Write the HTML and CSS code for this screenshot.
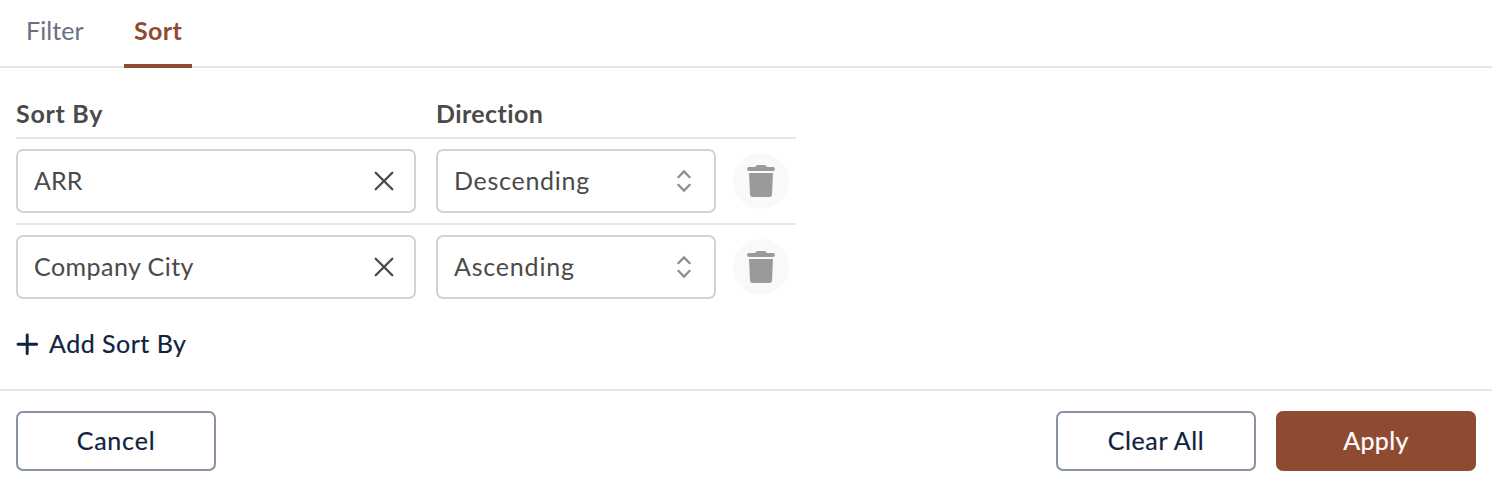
FILE: index.html
```html
<!DOCTYPE html>
<html lang="en">
<head>
<meta charset="utf-8">
<title>Sort</title>
<link rel="stylesheet" href="styles.css">
</head>
<body>
<svg width="0" height="0" class="sprite" aria-hidden="true">
  <symbol id="clear" viewBox="0 0 20 20"><path d="M1.7 1.7 18.3 18.3M18.3 1.7 1.7 18.3" fill="none" stroke="#434a54" stroke-width="2.3" stroke-linecap="round"/></symbol>
  <symbol id="chevrons" viewBox="0 0 16 24"><path d="M2.3 8.2 8 2.4l5.7 5.8M2.3 15.8l5.7 5.8 5.7-5.8" fill="none" stroke="#868e96" stroke-width="2.2" stroke-linecap="round"/></symbol>
  <symbol id="trash" viewBox="0 0 28 32"><path d="M2 2H8Q9 0 11 0H17Q19 0 20 2H26Q28 2 28 4Q28 6 26 6H2Q0 6 0 4Q0 2 2 2ZM2 8H26L25 29.5Q24.8 32 22.5 32H5.5Q3.2 32 3 29.5Z" fill="#9a9a9a"/></symbol>
</svg>
<nav class="tabs">
  <a class="tab"><span class="t-filter">Filter</span></a>
  <a class="tab active"><span class="t-sort">Sort</span></a>
</nav>
<main class="panel">
  <div class="head"><b class="t-by">Sort By</b><b class="t-direction">Direction</b></div>
  <div class="row">
    <div class="field"><span class="t-arr">ARR</span><svg class="clear"><use href="#clear"/></svg></div>
    <div class="field"><span class="t-desc">Descending</span><svg class="chevrons"><use href="#chevrons"/></svg></div>
    <button class="delete" aria-label="Delete"><svg class="trash"><use href="#trash"/></svg></button>
  </div>
  <div class="row">
    <div class="field"><span class="t-city">Company City</span><svg class="clear"><use href="#clear"/></svg></div>
    <div class="field"><span class="t-asc">Ascending</span><svg class="chevrons"><use href="#chevrons"/></svg></div>
    <button class="delete" aria-label="Delete"><svg class="trash"><use href="#trash"/></svg></button>
  </div>
  <button class="add"><svg class="plus" viewBox="0 0 22 22"><path d="M11.2 2V20.6M2 11.3H20.6" stroke="#0e233d" stroke-width="2.9" stroke-linecap="round"/></svg><span class="t-add">Add Sort By</span></button>
</main>
<footer class="footer">
  <button class="btn"><span class="t-cancel">Cancel</span></button>
  <div class="actions">
    <button class="btn"><span class="t-clear">Clear All</span></button>
    <button class="btn primary"><span class="t-apply">Apply</span></button>
  </div>
</footer>
</body>
</html>
```
FILE: styles.css
```css
* { box-sizing: border-box; }
body { margin: 0; height: 488px; background: #fff; color: #4a4a4a; font: 25px/30px Lato, "Open Sans", sans-serif; font-variant-ligatures: none; overflow: hidden; }
.sprite { display: none; }
button { font: inherit; border: 0; padding: 0; background: none; }
svg { flex: none; }
span, b { white-space: nowrap; }
.tabs { display: flex; height: 68px; padding-left: 16px; gap: 30px; border-bottom: 2px solid #e5e5ea; }
.tab { height: 68px; padding: 15px 10px 0; color: #6b7080; width: 78px; }
.tab.active { width: 68px; color: #8f4b32; border-bottom: 4px solid #8f4b32; font-weight: 700; }
.panel { width: 796px; height: 321px; padding: 30px 0 0 16px; }
.head { display: grid; grid-template-columns: 420px 1fr; height: 41px; border-bottom: 2px solid #e5e5ea; }
.row { display: grid; grid-template-columns: 400px 280px 56px; column-gap: 20px; align-items: center; height: 86px; border-bottom: 2px solid #e5e5ea; }
.row + .row { border-bottom-color: transparent; }
.field { display: flex; align-items: center; justify-content: space-between; height: 64px; padding: 0 20px 0 16px; border: 2px solid #ced3d8; border-radius: 7px; }
.field span, .add span { padding-bottom: 2px; }
.clear { width: 20px; height: 20px; }
.chevrons { width: 16px; height: 24px; margin-right: 2px; }
.delete { display: flex; align-items: center; justify-content: center; width: 56px; height: 56px; margin-left: -3px; border-radius: 50%; background: #f9f9f9; }
.trash { width: 28px; height: 32px; }
.add { display: flex; align-items: center; gap: 11px; height: 30px; margin-top: 18px; color: #0e233d; -webkit-text-stroke: .2px; }
.plus { width: 22px; height: 22px; }
.footer { display: flex; justify-content: space-between; height: 99px; padding: 20px 16px; border-top: 2px solid #e5e5ea; }
.actions { display: flex; gap: 20px; }
.btn { width: 200px; height: 60px; padding-bottom: 2px; border: 2px solid #8693a0; border-radius: 7px; color: #0e233d; -webkit-text-stroke: .2px; }
.primary { border-color: #8f4b32; background: #8f4b32; color: #fff; }

/* Per-label tracking */
.t-filter { letter-spacing: .1px; }
.t-sort { letter-spacing: .4px; }
.t-by { letter-spacing: .7px; }
.t-direction { letter-spacing: .4px; }
.t-arr { letter-spacing: .1px; }
.t-desc { letter-spacing: .72px; }
.t-city { letter-spacing: .45px; }
.t-asc { letter-spacing: .8px; }
.t-add { letter-spacing: .5px; }
.t-cancel { letter-spacing: .8px; }
.t-clear { letter-spacing: .6px; }
.t-apply { letter-spacing: .4px; }
```
